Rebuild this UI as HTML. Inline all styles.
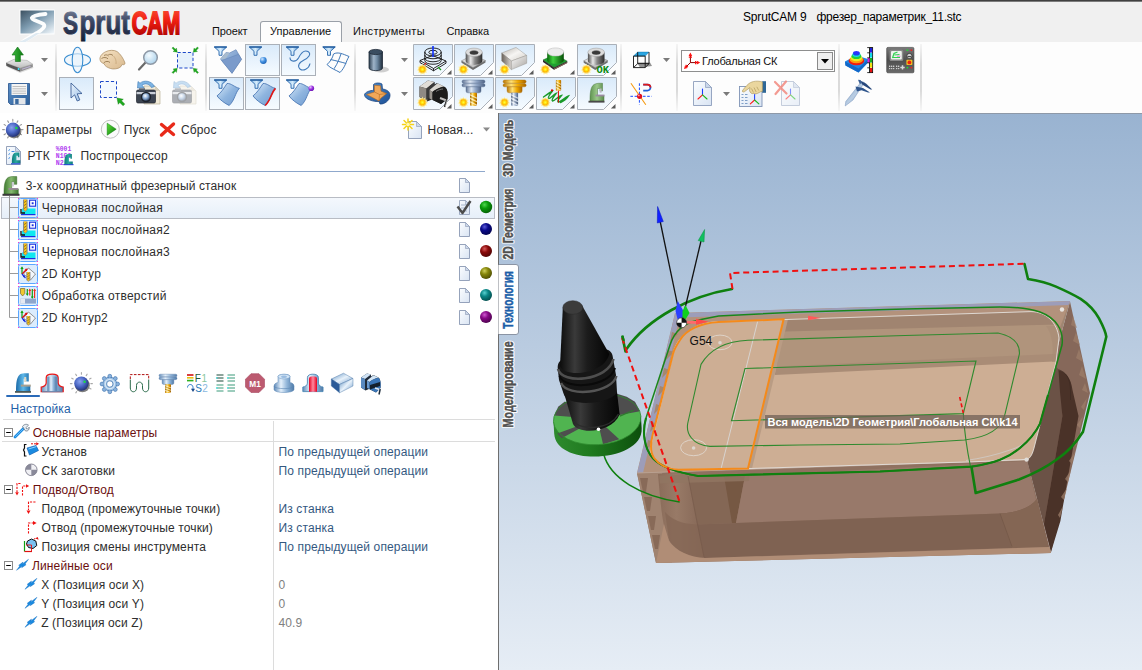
<!DOCTYPE html>
<html lang="ru">
<head>
<meta charset="utf-8">
<title>SprutCAM 9 фрезер_параметрик_11.stc</title>
<style>
*{box-sizing:border-box;margin:0;padding:0}
html,body{width:1142px;height:670px;overflow:hidden;background:#f0f0f0;font-family:"Liberation Sans",sans-serif;font-size:12px;color:#2e2e2e}
.abs{position:absolute}
#app{position:absolute;left:0;top:0;width:1142px;height:670px;overflow:hidden;background:#f0f0f0}
#topline{left:0;top:0;width:1142px;height:2px;background:linear-gradient(#404040 0,#404040 50%,#b8b8b8 100%)}
#toolbar{left:0;top:42px;width:1142px;height:71px;background:#fdfdfd}
#left{left:0;top:113px;width:498px;height:557px;background:#fff}
#view{left:498px;top:113px;width:644px;height:557px;background:linear-gradient(#93abcf 0,#a9bdd9 35%,#d3deec 75%,#f3f6fa 100%);border-left:1px solid #6a6a6a}
.t{position:absolute;white-space:nowrap;line-height:14px;letter-spacing:.13px}
.pv{color:#34587f}.pn{color:#808080}
.tab{position:absolute;white-space:nowrap;font-size:11px;line-height:13px;color:#111}
.sep{position:absolute;width:1px;background:#d0d0d0}
.selbtn{position:absolute;border:1px solid #aeb4bc;background:linear-gradient(#dcecfb,#eef6fd 60%,#f7fbff)}
svg{position:absolute;overflow:visible}
</style>
</head>
<body>
<div id="app">
<div id="topline" class="abs"></div>

<!-- HEADER -->
<div id="header" class="abs" style="left:0;top:0;width:1142px;height:42px">
<svg width="200" height="42" style="left:0;top:0" viewBox="0 0 200 42">
<defs>
<linearGradient id="lg1" x1="0" y1="0" x2="1" y2="1"><stop offset="0" stop-color="#3b5060"/><stop offset=".45" stop-color="#7d9bb0"/><stop offset="1" stop-color="#f4f9fd"/></linearGradient>
<linearGradient id="lgS" x1="0" y1="0" x2="0" y2="1"><stop offset="0" stop-color="#8a92a8"/><stop offset=".5" stop-color="#3a4562"/><stop offset="1" stop-color="#141e38"/></linearGradient>
<linearGradient id="lgC" x1="0" y1="0" x2="0" y2="1"><stop offset="0" stop-color="#ff5a3c"/><stop offset=".45" stop-color="#ee1c10"/><stop offset="1" stop-color="#9e0000"/></linearGradient>
<filter id="blur1"><feGaussianBlur stdDeviation="0.6"/></filter>
</defs>
<rect x="19.5" y="9.5" width="35" height="25" fill="#fff"/>
<rect x="20.5" y="10.5" width="33.5" height="23" fill="url(#lg1)"/>
<path d="M45.5 14 C39 14.6 32.5 16 31.8 18 C31.5 20 40 21.5 43.5 24 C46 26.5 42.5 29.5 37 33 C32 36 27 39 23 41.5" fill="none" stroke="#fff" stroke-width="3.8" stroke-linecap="round" opacity=".97"/>
<path d="M40 33 C35 36 30 39.5 25.5 42 L19 42 C25 39.5 31 36 36 33 Z" fill="#dfeaf2"/>
<g font-family="Liberation Sans,sans-serif" font-weight="bold" stroke-width="1">
<text x="63" y="33.8" font-size="32" textLength="15" lengthAdjust="spacingAndGlyphs" fill="url(#lgS)" stroke="url(#lgS)">S</text>
<text x="79.5" y="33.8" font-size="34" textLength="50.5" lengthAdjust="spacingAndGlyphs" fill="url(#lgS)" stroke="url(#lgS)">prut</text>
<text x="131.800" y="33.800" font-size="32" textLength="48.600" lengthAdjust="spacingAndGlyphs" fill="url(#lgC)" stroke="url(#lgC)" stroke-width="2">CAM</text>
</g>
</svg>
<div class="abs" style="left:260px;top:21px;width:82px;height:22px;background:#fdfdfd;border:1px solid #9aa0a8;border-bottom:none;border-radius:3px 3px 0 0"></div>
<span class="tab" style="left:212px;top:24.7px;letter-spacing:-.15px">Проект</span>
<span class="tab" style="left:270px;top:24.7px">Управление</span>
<span class="tab" style="left:353px;top:24.7px;letter-spacing:.3px">Инструменты</span>
<span class="tab" style="left:446.5px;top:24.7px;letter-spacing:-.1px">Справка</span>
<span class="t" style="left:743px;top:10px;font-size:12px;color:#000;letter-spacing:-.18px">SprutCAM 9</span>
<span class="t" style="left:816.5px;top:10px;font-size:12px;color:#000;letter-spacing:-.27px">фрезер_параметрик_11.stc</span>
</div>

<!-- TOOLBAR -->
<div id="toolbar" class="abs">
<svg width="1142" height="71" viewBox="0 42 1142 71" style="left:0;top:0">
<defs>
<linearGradient id="gsel" x1="0" y1="0" x2="0" y2="1"><stop offset="0" stop-color="#d9eafa"/><stop offset=".6" stop-color="#eaf4fd"/><stop offset="1" stop-color="#f6fbff"/></linearGradient>
<linearGradient id="gsep" x1="0" y1="0" x2="0" y2="1"><stop offset="0" stop-color="#ececec"/><stop offset=".3" stop-color="#b8b8b8"/><stop offset=".7" stop-color="#b8b8b8"/><stop offset="1" stop-color="#f2f2f2"/></linearGradient>
<radialGradient id="gsun" cx=".5" cy=".5" r=".5"><stop offset="0" stop-color="#ffff40"/><stop offset=".55" stop-color="#ffd400"/><stop offset=".8" stop-color="#ffb000"/><stop offset="1" stop-color="#ffe88a" stop-opacity=".5"/></radialGradient>
<g id="sun"><path d="M0 -5.800 L1 -3.500 L3 -5 L2.800 -2.600 L5.400 -2.600 L3.600 -.800 L5.800 .600 L3.500 1.400 L4.600 3.600 L2.200 3.200 L2 5.600 L.2 3.800 L-1.600 5.600 L-2 3.200 L-4.400 3.800 L-3.400 1.500 L-5.800 .800 L-3.700 -.700 L-5.200 -2.600 L-2.800 -2.600 L-3 -5 L-1 -3.500 Z" fill="#fff3a0" opacity=".9"/><circle r="4.400" fill="#ffe680" opacity=".45"/><circle r="3.4" fill="url(#gsun)" stroke="#f5a800" stroke-width=".5"/></g>
<path id="dd" d="M0 0 h7 l-3.5 4 z" fill="#7a7a7a"/>
<path id="cornertri" d="M0 0 v-4.6 l-4.6 4.6 z" fill="#5a5a5a"/>
</defs>
<rect x="55.5" y="44" width="1" height="67" fill="url(#gsep)"/>
<rect x="205.5" y="44" width="1" height="67" fill="url(#gsep)"/>
<rect x="354.5" y="44" width="1" height="67" fill="url(#gsep)"/>
<rect x="620.5" y="44" width="1" height="67" fill="url(#gsep)"/>
<rect x="676.5" y="44" width="1" height="67" fill="url(#gsep)"/>
<rect x="838.5" y="44" width="1" height="67" fill="url(#gsep)"/>
<rect x="920.5" y="44" width="1" height="67" fill="url(#gsep)"/>
<rect x="245.5" y="44.5" width="34" height="31" fill="url(#gsel)" stroke="#aab0b8"/>
<rect x="281.5" y="44.5" width="34" height="31" fill="url(#gsel)" stroke="#aab0b8"/>
<rect x="59.5" y="77.5" width="34" height="32" fill="url(#gsel)" stroke="#aab0b8"/>
<rect x="209.5" y="77.5" width="34" height="32" fill="url(#gsel)" stroke="#aab0b8"/>
<rect x="245.5" y="77.5" width="34" height="32" fill="url(#gsel)" stroke="#aab0b8"/>
<path d="M413.5 44.5 H452.5 V62.5 L439.5 75.5 H413.5 Z" fill="url(#gsel)" stroke="#aab0b8"/>
<use href="#cornertri" x="451.5" y="74.5"/>
<path d="M413.5 77.5 H452.5 V96.5 L439.5 109.5 H413.5 Z" fill="url(#gsel)" stroke="#aab0b8"/>
<use href="#cornertri" x="451.5" y="108.5"/>
<path d="M454.5 44.5 H493.5 V62.5 L480.5 75.5 H454.5 Z" fill="url(#gsel)" stroke="#aab0b8"/>
<use href="#cornertri" x="492.5" y="74.5"/>
<path d="M454.5 77.5 H493.5 V96.5 L480.5 109.5 H454.5 Z" fill="url(#gsel)" stroke="#aab0b8"/>
<use href="#cornertri" x="492.5" y="108.5"/>
<path d="M495.5 44.5 H534.5 V62.5 L521.5 75.5 H495.5 Z" fill="url(#gsel)" stroke="#aab0b8"/>
<use href="#cornertri" x="533.5" y="74.5"/>
<path d="M495.5 77.5 H534.5 V96.5 L521.5 109.5 H495.5 Z" fill="url(#gsel)" stroke="#aab0b8"/>
<use href="#cornertri" x="533.5" y="108.5"/>
<use href="#cornertri" x="574.5" y="74.5"/>
<path d="M536.5 77.5 H575.5 V96.5 L562.5 109.5 H536.5 Z" fill="url(#gsel)" stroke="#aab0b8"/>
<use href="#cornertri" x="574.5" y="108.5"/>
<path d="M577.5 44.5 H616.5 V62.5 L603.5 75.5 H577.5 Z" fill="url(#gsel)" stroke="#aab0b8"/>
<use href="#cornertri" x="615.5" y="74.5"/>
<path d="M577.5 77.5 H616.5 V96.5 L603.5 109.5 H577.5 Z" fill="url(#gsel)" stroke="#aab0b8"/>
<use href="#cornertri" x="615.5" y="108.5"/>
<use href="#dd" x="41" y="58"/>
<use href="#dd" x="41" y="92"/>
<use href="#dd" x="401" y="58"/>
<use href="#dd" x="401" y="92"/>
<use href="#dd" x="663" y="58"/>
<use href="#dd" x="723" y="92"/>
<rect x="681.5" y="50.5" width="153" height="21" fill="#fff" stroke="#8e8f8f"/>
<rect x="817.5" y="52.5" width="15" height="17" fill="#efefef" stroke="#8a8a8a"/>
<path d="M821 59 h8 l-4 4.5 z" fill="#000"/>
<!--I1--><defs>
<linearGradient id="gDrvTop" x1="0" y1="0" x2="0" y2="1"><stop offset="0" stop-color="#e9e9e9"/><stop offset="1" stop-color="#bdbdbd"/></linearGradient>
<linearGradient id="gDrvFr" x1="0" y1="0" x2="0" y2="1"><stop offset="0" stop-color="#8c8c8c"/><stop offset="1" stop-color="#5f5f5f"/></linearGradient>
<linearGradient id="gGreenUp" x1="0" y1="0" x2="1" y2="0"><stop offset="0" stop-color="#3fb83f"/><stop offset="1" stop-color="#0d7a12"/></linearGradient>
<linearGradient id="gFloppy" x1="0" y1="0" x2="1" y2="1"><stop offset="0" stop-color="#5b8fc8"/><stop offset="1" stop-color="#2d5f98"/></linearGradient>
<radialGradient id="gLens" cx=".4" cy=".35" r=".7"><stop offset="0" stop-color="#f4fbff"/><stop offset="1" stop-color="#a9d0ea"/></radialGradient>
<linearGradient id="gHand" x1="0" y1="0" x2="1" y2="1"><stop offset="0" stop-color="#f6e3c4"/><stop offset="1" stop-color="#d9b98e"/></linearGradient>
<linearGradient id="gCur" x1="0" y1="0" x2="1" y2="1"><stop offset="0" stop-color="#eaf3fc"/><stop offset="1" stop-color="#9cc0e6"/></linearGradient>
<radialGradient id="gCamLens" cx=".4" cy=".35" r=".7"><stop offset="0" stop-color="#ffffff"/><stop offset=".5" stop-color="#8fb0d8"/><stop offset="1" stop-color="#2b3d5c"/></radialGradient>
<g id="garrow"><path d="M0 0 L6 1.2 L4.2 2.6 L7.4 5.8 L5.8 7.4 L2.6 4.2 L1.2 6 Z" fill="#1faa1f" stroke="#0c7a0c" stroke-width=".4"/></g>
<g id="camera">
<path d="M8 6 h11 l5 5 v13 h-16 z" fill="#f1ead8" stroke="#b9b19a" stroke-width=".7"/>
<path d="M19 6 v5 h5 z" fill="#d8d0bb"/>
<path d="M18.500 6.500 C16 1 8 -0.500 4 3.200 L2 1.500 L1.500 8 L8 7.500 L6 5.300 C9 3 13.500 3.500 15.400 7.600 Z" fill="#7db4e4" stroke="#3c78b4" stroke-width=".6"/>
<rect x="0.5" y="10" width="19" height="13" rx="1.5" fill="#3c4450" stroke="#22272f" stroke-width=".7"/>
<rect x="3" y="8.3" width="6" height="2.4" fill="#596270"/>
<rect x="0.5" y="12" width="19" height="2.2" fill="#c9ced6"/>
<circle cx="10" cy="17" r="5.2" fill="#1d232c"/>
<circle cx="10" cy="17" r="3.8" fill="url(#gCamLens)"/>
</g>
</defs>
<!-- upload drive -->
<g>
<path d="M7 67 L20 73 L33.500 68 L32.800 66" fill="#000" opacity=".12"/>
<path d="M6 63 L14 59.300 L27 60.400 L32.800 64.200 L20 68.200 Z" fill="url(#gDrvTop)" stroke="#9a9a9a" stroke-width=".5"/>
<path d="M6 63 L20 68.200 V71.800 L6.400 66 Z" fill="#565656"/>
<path d="M20 68.200 L32.800 64.200 V67 L20 71.800 Z" fill="#8e8e8e"/>
<path d="M22 69.200 L30.500 66.400" stroke="#b9b0cc" stroke-width="1.200"/>
<circle cx="18.600" cy="69" r="1" fill="#35e8ff"/>
<path d="M17.600 47 L23.400 55 H20.400 V61.500 H15.400 V55 H12 Z" fill="url(#gGreenUp)" stroke="#0d6e12" stroke-width=".6"/>
</g>
<!-- save -->
<g>
<path d="M8.5 83.5 H29.5 V104.5 H10.5 L8.5 102.5 Z" fill="url(#gFloppy)" stroke="#24518a" stroke-width=".8"/>
<rect x="11.5" y="84" width="15.5" height="11" fill="#f4f4f4"/>
<path d="M12.5 86.5 h13.5 M12.5 88.8 h13.5 M12.5 91.1 h13.5 M12.5 93.3 h13.5" stroke="#b9b9b9" stroke-width=".9"/>
<rect x="13.5" y="98" width="12" height="6.5" fill="#e3e6ea"/>
<rect x="15.2" y="99" width="3.4" height="5" fill="#3a6aa0"/>
</g>
<!-- orbit -->
<g fill="#e9f4fc" fill-opacity=".6" stroke="#3d8fd1" stroke-width="1.1">
<ellipse cx="77.5" cy="60" rx="13" ry="6.3"/>
<ellipse cx="77.5" cy="60" rx="5.3" ry="12.8"/>
</g>
<!-- hand -->
<g>
<path d="M100 59.5 C99.5 56.5 102 53.5 105.5 51.8 C109 50 114 49.8 117 51.5 C120 53.5 123.5 58.5 125 63 C125.2 64.5 123.5 65.2 122.3 64.3 L121 66.5 C119 69 113 69.5 110.5 68.5 C107.5 67.5 104.5 66 104 63.5 C101.5 63 100.3 61.5 100 59.5 Z" fill="url(#gHand)" stroke="#a88a60" stroke-width=".7"/>
<path d="M101.5 58.5 C103.5 57 106.5 57.2 108 58.8 M103.8 62.8 C105.5 61 108.5 61 110 62.5 M108.3 54.8 C110 54 112 54.3 113 55.6 M104 55.5 C105.5 54.5 107.5 54.7 108.5 56" fill="none" stroke="#8d6f45" stroke-width=".8"/>
<path d="M113.5 56 C115.5 58 116.5 61 116 64" fill="none" stroke="#c2a072" stroke-width=".7"/>
</g>
<!-- magnifier -->
<g>
<path d="M145.5 62.5 L139 69.5" stroke="#6a6a6a" stroke-width="2.2" stroke-linecap="round"/>
<circle cx="150.5" cy="57.5" r="6.8" fill="url(#gLens)" stroke="#8e99a6" stroke-width="1.5"/>
</g>
<!-- zoom fit -->
<g>
<rect x="177.5" y="52.5" width="15.5" height="15.5" fill="#e6f1fb" stroke="#1c47c8" stroke-width="1" stroke-dasharray="3.2 2"/>
<use href="#garrow" transform="translate(177.3,52.3) rotate(180) scale(.72)"/>
<use href="#garrow" transform="translate(193.2,52.3) rotate(270) scale(.72)"/>
<use href="#garrow" transform="translate(177.3,68.2) rotate(90) scale(.72)"/>
<use href="#garrow" transform="translate(193.2,68.2) scale(.72)"/>
</g>
<!-- pointer -->
<path d="M71 83 L71 98 L74.6 94.8 L77.2 101 L79.8 99.9 L77.2 93.8 L82 93.5 Z" fill="url(#gCur)" stroke="#3c5f96" stroke-width=".9" stroke-linejoin="round"/>
<!-- dashed select -->
<g>
<rect x="100.5" y="81.5" width="16" height="16" fill="#f4f9fe" stroke="#1c47c8" stroke-width="1" stroke-dasharray="3.2 2"/>
<use href="#garrow" transform="translate(117,98) scale(1.05)"/>
</g>
<!-- cameras -->
<use href="#camera" transform="translate(136,80)"/>
<use href="#camera" transform="translate(172,80)" opacity=".42"/>
<!--/I1-->
<!--I2--><defs>
<linearGradient id="gFun" x1="0" y1="0" x2="1" y2="0"><stop offset="0" stop-color="#7fb6e6"/><stop offset=".5" stop-color="#d6ecfb"/><stop offset="1" stop-color="#4f8fd0"/></linearGradient>
<g id="funnel"><path d="M.3 .5 H12.700 L8 4.800 V8.800 H5 V4.800 Z" fill="url(#gFun)" stroke="#2a68ad" stroke-width=".9" stroke-linejoin="round"/><path d="M.3 .5 H12.700" stroke="#1f5a9c" stroke-width="1.300"/></g>
<linearGradient id="gSurf" x1="0" y1="0" x2="1" y2="1"><stop offset="0" stop-color="#dcecfa"/><stop offset=".5" stop-color="#8fb5df"/><stop offset="1" stop-color="#6d99cf"/></linearGradient>
<g id="surf"><path d="M11 4 C15 3.500 19 8 23.400 8.800 C19 13.500 19 20.500 13.200 26 C9 24 4 20.500 1 16.400 C5 13.500 8 8.500 11 4 Z" fill="url(#gSurf)" stroke="#3f6fae" stroke-width=".8" stroke-linejoin="round"/></g>
<linearGradient id="gFold" x1="0" y1="0" x2="1" y2="1"><stop offset="0" stop-color="#a9c4e4"/><stop offset="1" stop-color="#5f86bd"/></linearGradient>
<radialGradient id="gBall" cx=".35" cy=".3" r=".8"><stop offset="0" stop-color="#cfe6ff"/><stop offset=".5" stop-color="#3f8fe0"/><stop offset="1" stop-color="#1a5db0"/></radialGradient>
<radialGradient id="gBallP" cx=".35" cy=".3" r=".8"><stop offset="0" stop-color="#e8c8ff"/><stop offset=".5" stop-color="#9a30e0"/><stop offset="1" stop-color="#6010a8"/></radialGradient>
<linearGradient id="gCyl" x1="0" y1="0" x2="1" y2="0"><stop offset="0" stop-color="#2c3e50"/><stop offset=".35" stop-color="#9fb4c8"/><stop offset=".6" stop-color="#6f8aa3"/><stop offset="1" stop-color="#1f2d3c"/></linearGradient>
<linearGradient id="gBluP" x1="0" y1="0" x2="1" y2="1"><stop offset="0" stop-color="#4f8fd0"/><stop offset="1" stop-color="#1d4f94"/></linearGradient>
</defs>
<!-- filter folder -->
<g>
<path d="M220.500 59 L226 52.500 L229.500 53 L236 49.700 L241.500 59.300 L232 73.300 Z" fill="url(#gFold)" stroke="#5a7eb0" stroke-width=".6" stroke-linejoin="round"/>
<path d="M220.500 59 L226 52.500 L229.500 53.200 L225 59.500 Z" fill="#a9bccf"/>
<path d="M221.500 60.500 L238.500 54.300 L241.500 59.300 L232 73.300 Z" fill="#7b9bcb" stroke="#5a7eb0" stroke-width=".4"/>
<use href="#funnel" transform="translate(214,46.5)"/>
</g>
<!-- filter point -->
<g><use href="#funnel" transform="translate(249,46.5)"/><circle cx="263.3" cy="60.5" r="3.4" fill="url(#gBall)"/></g>
<!-- filter curve -->
<g><use href="#funnel" transform="translate(286,46.5)"/>
<path d="M290 57.5 C290 62 296 62.5 298.5 58 C301 53 304 49.5 308 51.5 C312 54 308 58 304 60 C299 62.5 297 66 300 69 C303 71.5 309 69 310 63.5" fill="none" stroke="#3f78b8" stroke-width="1.1"/></g>
<!-- filter mesh -->
<g><use href="#funnel" transform="translate(322.5,46.5)"/>
<g fill="none" stroke="#3f78b8" stroke-width="1"><path d="M333.5 54 C338 51.5 343 54 349 56.5 C346 61 345.5 67 340 72.5 C336 70 330.5 68.5 327 64.5 C330.5 61.5 332.5 58 333.5 54 Z"/><path d="M341 53.8 C339.5 58 338 63 334 68.8 M330.5 59.5 C335 60.5 341 62 346.2 63.5"/></g></g>
<!-- row2 filter surfaces -->
<g><use href="#surf" transform="translate(216,79.5)"/><use href="#funnel" transform="translate(214,79.5)"/></g>
<g><use href="#surf" transform="translate(252,79.5)"/><path d="M275.400 88.300 C271 93 271 100 265.200 105.500" fill="none" stroke="#e01818" stroke-width="1.700"/><use href="#funnel" transform="translate(250,79.5)"/></g>
<g><use href="#surf" transform="translate(288,79.5)"/><use href="#funnel" transform="translate(286,79.5)"/><circle cx="311.300" cy="88.300" r="2.800" fill="url(#gBallP)"/></g>
<!-- cylinder -->
<g>
<ellipse cx="381" cy="69.5" rx="8" ry="3" fill="#000" opacity=".18"/>
<path d="M369 52 V68 C369 71.5 382.5 71.5 382.5 68 V52 Z" fill="url(#gCyl)" stroke="#1f2b38" stroke-width=".8"/>
<ellipse cx="375.75" cy="52" rx="6.75" ry="2.6" fill="#3a4d60" stroke="#1f2b38" stroke-width=".8"/>
</g>
<!-- 3d part -->
<g>
<path d="M364.5 95 C364.5 92 371 90 373.5 90.5 L373.5 84.5 C375 82.5 380 82.5 382 84 L382.5 89 C387 89.5 390.5 92 390 96 C389.5 101 384 104.5 380 104 L379 101.5 C374 102 365 99.5 364.5 95 Z" fill="url(#gBluP)" stroke="#163f7a" stroke-width=".7"/>
<path d="M366.5 94.5 L374.5 92 L374.5 85.2 L380.5 85.8 L381 91.2 L386.5 93.5 L380.5 98.5 L379 101 L372.5 97.5 Z" fill="#f0a85a" stroke="#b56a20" stroke-width=".6"/>
<path d="M374.5 92 L379.5 94.5 L386.5 93.5 M379.5 94.5 L379 101" fill="none" stroke="#b56a20" stroke-width=".6"/>
</g>
<!--/I2-->
<!--I3--><defs>
<linearGradient id="gMetH" x1="0" y1="0" x2="1" y2="0"><stop offset="0" stop-color="#4a4a4a"/><stop offset=".3" stop-color="#e8e8e8"/><stop offset=".55" stop-color="#8a8a8a"/><stop offset="1" stop-color="#2c2c2c"/></linearGradient>
<linearGradient id="gPlate" x1="0" y1="0" x2="1" y2="1"><stop offset="0" stop-color="#f2f2f2"/><stop offset="1" stop-color="#a9a9a9"/></linearGradient>
<linearGradient id="gGrnH" x1="0" y1="0" x2="1" y2="0"><stop offset="0" stop-color="#0a6a0a"/><stop offset=".35" stop-color="#3fd03f"/><stop offset="1" stop-color="#064f06"/></linearGradient>
<linearGradient id="gGoldH" x1="0" y1="0" x2="1" y2="0"><stop offset="0" stop-color="#b87400"/><stop offset=".35" stop-color="#ffe27a"/><stop offset=".65" stop-color="#f0a800"/><stop offset="1" stop-color="#a86400"/></linearGradient>
<linearGradient id="gSteelH" x1="0" y1="0" x2="1" y2="0"><stop offset="0" stop-color="#5f7394"/><stop offset=".35" stop-color="#dfe8f4"/><stop offset=".65" stop-color="#8fa4c4"/><stop offset="1" stop-color="#4f6384"/></linearGradient>
<linearGradient id="gBoxT" x1="0" y1="0" x2="1" y2="1"><stop offset="0" stop-color="#b9b4ae"/><stop offset=".5" stop-color="#f6f5f3"/><stop offset="1" stop-color="#d2cec8"/></linearGradient>
<linearGradient id="gBoxL" x1="0" y1="0" x2="1" y2="0"><stop offset="0" stop-color="#6a625a"/><stop offset="1" stop-color="#d9d6d2"/></linearGradient>
<linearGradient id="gBoxR" x1="0" y1="0" x2="1" y2="1"><stop offset="0" stop-color="#fafafa"/><stop offset="1" stop-color="#a8a49f"/></linearGradient>
<linearGradient id="gMach" x1="0" y1="0" x2="1" y2="0"><stop offset="0" stop-color="#5f9450"/><stop offset=".5" stop-color="#9cc88a"/><stop offset="1" stop-color="#5a8a4c"/></linearGradient>
<g id="ringplate">
<path d="M-12.5 8.5 L-1.5 3 L11.5 8.2 L-1 15.5 Z" fill="url(#gPlate)" stroke="#777" stroke-width=".5"/>
<path d="M-12.5 8.5 L-1 15.5 L11.5 8.2 V10.2 L-1 17.8 L-12.5 10.5 Z" fill="#6e6e6e"/>
<path d="M-8.3 0 V8.5 C-8.3 14 8.3 14 8.3 8.5 V0 Z" fill="url(#gMetH)"/>
<ellipse cx="0" cy="0" rx="8.3" ry="4.2" fill="#dcdcdc" stroke="#9a9a9a" stroke-width=".5"/>
<ellipse cx="0" cy=".3" rx="4.3" ry="2.2" fill="#3a3a3a"/>
<path d="M-4.3 .3 A4.3 2.2 0 0 1 4.3 .3 A4.6 3 0 0 0 -4.3 .3 Z" fill="#8a8a8a"/>
</g>
<g id="holder">
<rect x="-11.5" y="0" width="23" height="3.2" rx="1.6"/>
<rect x="-11.5" y="3.6" width="23" height="3.2" rx="1.6"/>
<path d="M-7.5 6.8 H7.5 V11 Q7.5 12.8 5.5 12.8 H-5.5 Q-7.5 12.8 -7.5 11 Z"/>
</g>
<g id="mill"><rect x="-3.5" y="0" width="7" height="13" rx=".8"/><path d="M-3.5 2 L3.5 5.5 M-3.5 5.5 L3.5 9 M-3.5 9 L3.5 12.5" stroke="#fff" stroke-opacity=".65" stroke-width="1.2"/><path d="M-3.5 3.6 L3.5 7.1 M-3.5 7.1 L3.5 10.6" stroke="#000" stroke-opacity=".25" stroke-width=".8"/></g>
</defs>
<!-- R1B1 wireframe -->
<g fill="none" stroke="#111" stroke-width=".9">
<path d="M420 60.5 L432.5 55.5 L446 61 L433.5 68.5 Z M420 60.5 V62.6 L433.5 70.8 L446 63.2 V61 M433.5 68.5 V70.8"/>
<ellipse cx="433" cy="52" rx="8.2" ry="4"/><ellipse cx="433" cy="52.3" rx="4.2" ry="2"/>
<path d="M424.8 52 V60.5 C424.8 65.5 441.2 65.5 441.2 60.5 V52"/>
<path d="M424.8 55 C424.8 60 441.2 60 441.2 55 M424.8 58 C424.8 63 441.2 63 441.2 58"/>
<path d="M433 46 V57" stroke="#1030ff" stroke-width="1.6"/>
<path d="M438 67 L441 70" stroke="#18a018" stroke-width="1.2"/>
<path d="M424.5 65 L426 63" stroke="#e01818" stroke-width="1.2"/>
</g>
<use href="#sun" x="422.4" y="69.4"/>
<!-- R1B2 ring -->
<use href="#ringplate" transform="translate(474,52.3)"/>
<use href="#sun" x="463.4" y="69.4"/>
<!-- R1B3 box -->
<g stroke="#8a857f" stroke-width=".4" stroke-linejoin="round">
<path d="M501.7 53 L516 47.4 L526.7 55.4 L511.4 61 Z" fill="url(#gBoxT)"/>
<path d="M501.7 53 L511.4 61 V69.6 L501.7 61 Z" fill="url(#gBoxL)"/>
<path d="M511.4 61 L526.7 55.4 V63.3 L511.4 69.6 Z" fill="url(#gBoxR)"/>
</g>
<use href="#sun" x="504.5" y="69.4"/>
<!-- R1B4 green cyl -->
<g>
<path d="M543 60 L555 54.5 L567.2 61.2 L554 67.5 Z" fill="#1fa030" stroke="#0a5a12" stroke-width=".5"/>
<path d="M543 60 L554 67.5 L567.2 61.2 V63 L554 69.8 L543 62 Z" fill="#2a2a2a"/>
<path d="M554 69.8 L567.2 63 V62 L554 68.6 Z" fill="#8a6a5a"/>
<path d="M547.2 52 V60 C547.2 65 563.8 65 563.8 60 V52 Z" fill="url(#gGrnH)"/>
<ellipse cx="555.5" cy="52" rx="8.3" ry="4.1" fill="#ececec" stroke="#b5b5b5" stroke-width=".5"/>
</g>
<use href="#sun" x="545.3" y="69.4"/>
<!-- R1B5 ring OK -->
<use href="#ringplate" transform="translate(596.2,52.3)"/>
<use href="#sun" x="586.3" y="69.4"/>
<text x="596.5" y="73" font-family="Liberation Mono,monospace" font-weight="bold" font-size="10" fill="#0a8a0a" textLength="12.5" lengthAdjust="spacingAndGlyphs">OK</text>
<!-- R2B1 vise -->
<g>
<path d="M419.5 86.5 L428 80.5 L434.5 82 L434.5 84.5 L437 83 L444 86.5 C447.5 88 448 93 447.5 99 L441 104 L432 99.5 L427 101.5 L419.5 97 Z" fill="#2a2a2a"/>
<path d="M419.5 86.5 L428 80.5 L434.5 82 L426.5 88.5 Z" fill="#e0ddd8"/>
<path d="M419.5 86.5 L426.5 88.5 V100 L419.5 97 Z" fill="#8f8a84"/>
<path d="M426.5 88.5 L434.5 82 V93 L426.5 100 Z" fill="#3a3a3a"/>
<path d="M429.5 90 L437.5 83.2 L444 86.5 C440 87 434 90.5 432.5 92 Z" fill="#d9d6d0"/>
<path d="M429.5 90 L432.5 92 V100 L429.5 98.5 Z" fill="#9a958f"/>
<path d="M432.5 92 C435 89.5 441 87 444.5 87 C447.5 88.5 448 93 447.5 99 L441 104 L432.5 100 Z" fill="#1c1c1c"/>
<path d="M436 91.5 C438 90 441 89 443 89" stroke="#8a8a8a" stroke-width=".8" fill="none"/>
<path d="M440 98 L446.5 100.5" stroke="#bdbdbd" stroke-width="2"/>
<path d="M447 99 L444.5 107" stroke="#222" stroke-width="1.6"/><path d="M447.5 99 L445.3 106.5" stroke="#ddd" stroke-width=".6"/>
</g>
<use href="#sun" x="422.4" y="102.4"/>
<!-- R2B2 steel holder gold mill -->
<use href="#holder" transform="translate(473.5,80)" fill="url(#gSteelH)" stroke="#4a5f84" stroke-width=".4"/>
<use href="#mill" transform="translate(473.5,92.8)" fill="url(#gGoldH)"/>
<use href="#sun" x="463.4" y="102.4"/>
<!-- R2B3 gold holder steel mill -->
<use href="#holder" transform="translate(514.6,80)" fill="url(#gGoldH)" stroke="#a86a00" stroke-width=".4"/>
<use href="#mill" transform="translate(514.6,92.8)" fill="url(#gSteelH)"/>
<use href="#sun" x="504.5" y="102.4"/>
<!-- R2B4 toolpath -->
<g>
<path d="M543.5 97 C547 94.5 550 92.5 552 91.5 C550 94.5 547.5 97.5 548.5 98.5 C550 99 553.5 94.5 556 93.5 C554 96.5 551 100 552.5 101 C554.5 101.5 558 96 561.5 95.5 C559.5 98 556.5 101.5 558.5 102 C561 102 564.5 97.5 568.5 96 C567 98.5 563 101.5 560.5 102.5" fill="none" stroke="#1a9a2a" stroke-width="1.4" stroke-linecap="round"/>
<use href="#mill" transform="translate(558.5,80) scale(.75,.82)" fill="url(#gGoldH)"/>
<path d="M558.4 90.7 V102.6" stroke="#e00000" stroke-width="1"/>
<circle cx="552" cy="90.4" r="1.1" fill="#e00000"/>
</g>
<use href="#sun" x="545.3" y="102.4"/>
<!-- R2B5 machine -->
<g id="machG">
<path d="M590 101 C590 93 590.5 87 594 84.5 C596.5 83 600 83.2 602.5 83.3 V91 H600 V88.5 H597.5 V95.5 H604 V101 Z" fill="url(#gMach)" stroke="#4c7a40" stroke-width=".5"/>
<rect x="599.6" y="88.5" width="2" height="4.2" fill="#b9b9c0"/>
<rect x="595.5" y="94.6" width="9" height="1.8" fill="#9a8aa0"/>
<rect x="588.5" y="100.8" width="16" height="1.8" fill="#4a4a4a"/>
</g>
<!--/I3-->
<!--I4--><defs>
<linearGradient id="gDoc" x1="0" y1="0" x2="1" y2="1"><stop offset="0" stop-color="#fbfdff"/><stop offset="1" stop-color="#d9e4f3"/></linearGradient>
<g id="docic"><path d="M.5 .5 H12.5 L18.5 6.5 V24.5 H.5 Z" fill="url(#gDoc)" stroke="#8c9dbb" stroke-width=".9"/><path d="M12.5 .5 V6.5 H18.5 Z" fill="#c9d6ea" stroke="#8c9dbb" stroke-width=".7"/></g>
<g id="axis3" stroke-width="1.1" stroke-linecap="round"><path d="M0 0 V-5.8" stroke="#1a3cff"/><path d="M0 0 L-4.5 4.2" stroke="#ff1a1a"/><path d="M0 0 L4.5 4.2" stroke="#18b818"/></g>
<linearGradient id="gCnc" x1="0" y1="0" x2="0" y2="1"><stop offset="0" stop-color="#7a7a7a"/><stop offset=".5" stop-color="#4e4e4e"/><stop offset="1" stop-color="#6a6a6a"/></linearGradient>
<linearGradient id="gCal" x1="0" y1="0" x2="1" y2="1"><stop offset="0" stop-color="#6f93bf"/><stop offset=".5" stop-color="#b9cde3"/><stop offset="1" stop-color="#8aa6c8"/></linearGradient>
</defs>
<!-- box view -->
<g>
<path d="M637 62.5 L650 62.5 L652 66 L640 67.5 Z" fill="#6f6f6f" opacity=".75"/>
<path d="M633.5 56.1 L637.7 52.1 H649 L645.2 56.1 Z" fill="#2aa6e2" stroke="#1478b0" stroke-width=".5"/>
<path d="M633.5 56.1 H645.2 V67.6 H633.5 Z M637.7 52.1 V63.6 H649 V52.1 M633.5 67.6 L637.7 63.6 M645.2 67.6 L649 63.6" fill="none" stroke="#111" stroke-width=".9"/>
</g>
<!-- snap -->
<g>
<path d="M630.9 83.3 L645.8 104.7" stroke="#f59a10" stroke-width="1.1"/>
<path d="M639.4 83.3 V104.7 M630.4 96.3 H651.8" stroke="#1a4cff" stroke-width="1" stroke-dasharray="2.6 1.6"/>
<circle cx="639.6" cy="96.3" r="2.6" fill="#e01020"/><circle cx="638.8" cy="95.4" r=".9" fill="#ff9a9a"/>
<path d="M643.2 84.6 H647.5 A3 3 0 0 1 647.5 90.6 H643.2" fill="none" stroke="#2060d8" stroke-width="1.7"/>
<path d="M643.2 84.6 H647.5 A3 3 0 0 1 650.5 87.6" fill="none" stroke="#e01818" stroke-width="1.7"/>
</g>
<!-- combobox axis -->
<g stroke="#8b0000" stroke-width="1" fill="#ff1010">
<path d="M690.4 62.6 V54 M690.4 62.6 H699 M690.4 62.6 L685 68" fill="none"/>
<path d="M690.4 52.6 L692.2 56 H688.6 Z M700.2 62.6 L696.8 60.8 V64.4 Z M684 69 L685 65.4 L687.6 68 Z" stroke="none"/>
<path d="M688.8 57.2 h3.2 M695.6 61 v3.2 M685.6 64.9 l2.3 2.3" stroke="#ff1010" stroke-width="1.2"/>
</g>
<!-- doc axis -->
<use href="#docic" transform="translate(693,81)"/>
<use href="#axis3" transform="translate(702.5,94.8)"/>
<!-- hand doc -->
<g>
<rect x="739.5" y="86.5" width="22.5" height="20" fill="url(#gDoc)" stroke="#7f93b5" stroke-width=".9"/>
<path d="M741.5 94.5 h2 m1.5 0 h2.5 M741.5 97.5 h2 m1.5 0 h2.5 M741.5 100.5 h2 m1.5 0 h2.5 M741.5 103.5 h2 m1.5 0 h2.5" stroke="#7f9fc8" stroke-width="1"/>
<use href="#axis3" transform="translate(754.6,100) scale(.95)"/>
<rect x="762.2" y="81.2" width="3.8" height="11.6" fill="#2f6796"/>
<path d="M762.4 82 C758 80.5 752.5 81 749 83.5 C746 86 743.5 89 742.3 91 C742.3 92 743.5 92.3 744.6 91.6 L750 87.5 L749.5 90.5 C750 93 752 94 753.5 93.5 L756 93.8 C758.5 93.5 760 91.5 762.4 91.2 Z" fill="#ead69e" stroke="#a89050" stroke-width=".6"/>
<path d="M751.5 88.5 L753.5 92.5 M754 87.5 L756.2 92 M756.8 86.8 L758.8 90.5" stroke="#a89050" stroke-width=".6" fill="none"/>
</g>
<!-- X doc -->
<g opacity=".55"><use href="#docic" transform="translate(781,81)"/><use href="#axis3" transform="translate(790.5,94.8)"/></g>
<path d="M775 82 L786.5 93.5 M786 81.5 L775.5 94" stroke="#f28a80" stroke-width="2.2" stroke-linecap="round" opacity=".85"/>
<!-- heat map -->
<g>
<path d="M845 61.5 L856 55.5 L868 59 L867.5 63 L858.5 72.5 L845.5 65.5 Z" fill="#1f86e8"/>
<path d="M845 61.5 L858.5 68.5 L868 59 L867.5 63 L858.5 72.5 L845.5 65.5 Z" fill="#1268c8"/>
<ellipse cx="856.4" cy="61" rx="7.8" ry="4.2" fill="#f01a10"/>
<ellipse cx="856.4" cy="59.6" rx="6.8" ry="3.7" fill="#ff9a10"/>
<ellipse cx="856.4" cy="58" rx="5.8" ry="3.2" fill="#e8f020"/>
<ellipse cx="856.4" cy="56.3" rx="4.9" ry="2.8" fill="#20d040"/>
<ellipse cx="856.4" cy="54.6" rx="4" ry="2.4" fill="#18d8e8"/>
<path d="M853.2 52.5 V54 C853.2 56 859.6 56 859.6 54 V52.5 Z" fill="#1a40e8"/>
<ellipse cx="856.4" cy="52.5" rx="3.2" ry="1.6" fill="#2a30ff"/>
<rect x="869.6" y="47.6" width="3" height="25" fill="#fff" stroke="#000" stroke-width=".9"/>
<rect x="870" y="48" width="2.2" height="4.6" fill="#2020e0"/><rect x="870" y="53" width="2.2" height="4.6" fill="#10d8e8"/><rect x="870" y="58" width="2.2" height="4.6" fill="#10b020"/><rect x="870" y="63" width="2.2" height="4.6" fill="#f0e010"/><rect x="870" y="68" width="2.2" height="4.2" fill="#e81010"/>
<rect x="867.6" y="58" width="2" height="4.6" fill="#e020e0"/>
<path d="M867.2 47.6 h2.4 M867.2 52.8 h2.4 M867.2 57.8 h2.4 M867.2 62.8 h2.4 M867.2 67.8 h2.4 M867.2 72.6 h2.4" stroke="#000" stroke-width=".8"/>
</g>
<!-- CNC panel -->
<g>
<rect x="886.7" y="47.4" width="27.2" height="25.4" rx="1.2" fill="url(#gCnc)" stroke="#3a3a3a" stroke-width=".6"/>
<rect x="889.6" y="49.8" width="13.6" height="11.2" rx="1.5" fill="#8a8a8a"/>
<rect x="891" y="51" width="10.8" height="8.6" rx="1" fill="#eef4ee"/>
<path d="M892.5 58 L894 53.5 L897.5 52 M893 57.5 H900 M894.5 55 L899.5 54.5" stroke="#30d050" stroke-width="1.2" fill="none"/>
<path d="M897 56.2 h3.5" stroke="#e040d0" stroke-width=".7"/>
<g fill="#e8e8e8"><circle cx="889.7" cy="66.2" r=".7"/><circle cx="891.7" cy="66.2" r=".7"/><circle cx="893.7" cy="66.2" r=".7"/><circle cx="889.7" cy="68.6" r=".7"/><circle cx="891.7" cy="68.6" r=".7"/><circle cx="893.7" cy="68.6" r=".7"/><circle cx="896.7" cy="66.2" r=".7"/><circle cx="898.7" cy="66.2" r=".7"/><circle cx="896.7" cy="68.6" r=".7"/><circle cx="898.7" cy="68.6" r=".7"/></g>
<path d="M902.5 65.2 v4.4 M900.3 67.4 h4.4" stroke="#d8d8d8" stroke-width="1.5"/>
<circle cx="907.4" cy="50.2" r=".9" fill="#20e030"/><circle cx="911.4" cy="50.2" r=".9" fill="#f02020"/>
<circle cx="909.4" cy="56" r="2.6" fill="#d0d0d0" stroke="#2a2a2a" stroke-width=".7"/><path d="M907.6 56.6 h3.6" stroke="#2a2a2a" stroke-width=".9"/>
<rect x="906.4" y="59.8" width="6" height="5.2" rx=".8" fill="#f0c020"/><circle cx="909.4" cy="62.4" r="1.9" fill="#f02010"/>
<circle cx="907.4" cy="67.6" r=".9" fill="#20e030"/><circle cx="911.4" cy="67.6" r=".9" fill="#f02020"/>
</g>
<!-- caliper -->
<g>
<path d="M845.2 106 L845.8 101.5 L861.5 81.5 L864.5 82.5 L853 100 Z" fill="url(#gCal)" stroke="#5f82ad" stroke-width=".4"/>
<path d="M859.8 80.5 L866 83.5 L872.2 89.5 L870.5 89.5 L862.5 84.8 Z" fill="#27487c"/>
<path d="M855.5 86.5 L863 88 L870 92.5 L868 92.6 L861.5 90.2 L857 91.5 Z" fill="#2f558c"/>
<path d="M858 79.8 L860.5 80 L862 83 L859.8 84 Z" fill="#3a5f94"/>
</g>
<!--/I4-->
<!--ICONS-->
</svg>
<span class="t" style="left:702px;top:12px;font-size:11px;letter-spacing:-.2px;color:#111">Глобальная СК</span>
</div>

<!-- LEFT PANEL -->
<div id="left" class="abs">
</div>

<!-- LEFT TOP -->
<svg width="498" height="230" viewBox="0 113 498 230" style="left:0;top:113px">
<defs>
<radialGradient id="gKnob" cx=".4" cy=".35" r=".7"><stop offset="0" stop-color="#8aa4ee"/><stop offset=".5" stop-color="#4a66c4"/><stop offset="1" stop-color="#1f2c6a"/></radialGradient>
<linearGradient id="gPlay" x1="0" y1="0" x2="1" y2="1"><stop offset="0" stop-color="#5fe03a"/><stop offset="1" stop-color="#087a08"/></linearGradient>
<linearGradient id="gRowSel" x1="0" y1="0" x2="0" y2="1"><stop offset="0" stop-color="#f4f8fd"/><stop offset="1" stop-color="#e6eff9"/></linearGradient>
<linearGradient id="gMachG" x1="0" y1="0" x2="1" y2="0"><stop offset="0" stop-color="#3f7a30"/><stop offset=".5" stop-color="#86b870"/><stop offset="1" stop-color="#3f7a30"/></linearGradient>
<linearGradient id="gMachT" x1="0" y1="0" x2="1" y2="0"><stop offset="0" stop-color="#0f7a7a"/><stop offset=".5" stop-color="#2aa8a0"/><stop offset="1" stop-color="#0f7a7a"/></linearGradient>
<g id="mach"><path d="M1.5 17.5 C1.5 9.5 2 3.5 5.5 1 C8 -.3 11.5 0 14 .1 V7.8 H11.5 V5.3 H9 V12.3 H15.5 V17.5 Z"/></g>
<g id="sdoc"><path d="M.5 .5 H6.5 L10.5 4.5 V14.5 H.5 Z" fill="url(#gDoc)" stroke="#8a99b3" stroke-width=".9"/><path d="M6.5 .5 V4.5 H10.5 Z" fill="#cdd8ea" stroke="#8a99b3" stroke-width=".6"/></g>
<radialGradient id="gB0" cx=".38" cy=".32" r=".75"><stop offset="0" stop-color="#4fd84f"/><stop offset=".4" stop-color="#0a9a0a"/><stop offset="1" stop-color="#045a04"/></radialGradient>
<radialGradient id="gB1" cx=".38" cy=".32" r=".75"><stop offset="0" stop-color="#5a5ad8"/><stop offset=".4" stop-color="#0a0a8a"/><stop offset="1" stop-color="#02024a"/></radialGradient>
<radialGradient id="gB2" cx=".38" cy=".32" r=".75"><stop offset="0" stop-color="#d85a5a"/><stop offset=".4" stop-color="#8a0a0a"/><stop offset="1" stop-color="#4a0202"/></radialGradient>
<radialGradient id="gB3" cx=".38" cy=".32" r=".75"><stop offset="0" stop-color="#d0d05a"/><stop offset=".4" stop-color="#86860a"/><stop offset="1" stop-color="#484802"/></radialGradient>
<radialGradient id="gB4" cx=".38" cy=".32" r=".75"><stop offset="0" stop-color="#5ad0d0"/><stop offset=".4" stop-color="#0a8686"/><stop offset="1" stop-color="#024848"/></radialGradient>
<radialGradient id="gB5" cx=".38" cy=".32" r=".75"><stop offset="0" stop-color="#d05ad0"/><stop offset=".4" stop-color="#860a86"/><stop offset="1" stop-color="#480248"/></radialGradient>
<g id="opframe"><rect x=".5" y=".5" width="19" height="19" rx="2" fill="#dcecfd" stroke="#5aa6ff" stroke-width="1"/><path d="M0 0h1v1h-1z M19 0h1v1h-1z M0 19h1v1h-1z M19 19h1v1h-1z" fill="#ff30d0"/></g>
<g id="tmill"><path d="M0 0 H4.6 V10 L2.3 12.2 L0 10 Z" fill="#8a8a8a"/><path d="M1 0 H3.6 V10 L2.3 11.3 L1 10 Z" fill="#f6c21a"/><path d="M1 3 L3.6 1.2 M1 6 L3.6 4.2 M1 9 L3.6 7.2" stroke="#8a6a10" stroke-width=".8"/></g>
<g id="opRough"><use href="#opframe"/><rect x="4" y="10.5" width="13.5" height="5.5" fill="#10e8f0"/><path d="M3 11 V15 H7" fill="none" stroke="#111" stroke-width="1.3"/><path d="M3 16.6 H17.5" stroke="#1a30e0" stroke-width="1.2"/><use href="#tmill" transform="translate(5,1.6)"/><rect x="11.6" y="2.2" width="6" height="6" fill="#fff" stroke="#1a30e0" stroke-width="1.1"/><rect x="13.7" y="4.3" width="1.9" height="1.9" fill="#1a30e0"/></g>
<g id="opCont"><use href="#opframe"/><path d="M10.5 4 L17.5 10 L12.5 16 L5.5 10 Z" fill="#f4f8fd" stroke="#7a7a7a" stroke-width=".8"/><path d="M4 10 V3.5" stroke="#10a010" stroke-width="1.2"/><path d="M4 2.2 L5.6 5 H2.4 Z" fill="#10a010"/><path d="M4 10 L8.5 5.5" stroke="#e01010" stroke-width="1.2"/><path d="M9.6 4.4 L8.9 7.3 L6.7 5.1 Z" fill="#e01010"/><path d="M4 10 L7.5 14" stroke="#1a30e0" stroke-width="1.2"/><circle cx="6" cy="12.2" r="1" fill="#1a30e0"/><use href="#tmill" transform="translate(8.3,8) scale(.9,.8)"/></g>
<g id="opHole"><use href="#opframe"/><path d="M2.5 2.5 H6.8 V7.5 L4.6 10 L2.5 7.5 Z" fill="#f0c830" stroke="#7a6a2a" stroke-width=".7"/><path d="M9.3 3 V9" stroke="#10a010" stroke-width="1.2"/><path d="M9.3 10 L7.9 7.4 H10.7 Z" fill="#10a010"/><path d="M11.8 9.5 V3.5" stroke="#f03020" stroke-width="1.2"/><path d="M11.8 2.4 L10.4 5 H13.2 Z" fill="#f03020"/><path d="M14.3 3 V12" stroke="#10a010" stroke-width="1.2"/><path d="M14.3 13 L12.9 10.4 H15.7 Z" fill="#10a010"/><path d="M16.6 12 V3.5" stroke="#f03020" stroke-width="1.2"/><path d="M16.6 2.4 L15.2 5 H18 Z" fill="#f03020"/><rect x="2.5" y="12.6" width="15.5" height="5" fill="#8fa6cc"/><rect x="2.5" y="12.6" width="4.5" height="5" fill="#e4e9f2"/></g>
</defs>
<!-- row 1 -->
<g>
<g stroke="#9a9a9a" stroke-width="1.1" stroke-linecap="round"><path d="M12.8 121.2v-1.8M17 122.4l.9-1.5M20 125.4l1.5-.9M21.2 129.6h1.8M20 133.8l1.5.9M8.6 122.4l-.9-1.500M5.600 125.400l-1.500-.9M4.400 129.600h-1.800M5.600 133.800l-1.500.9M8.400 136.600l-.8 1.300M17.200 136.600l.8 1.300"/></g>
<ellipse cx="14" cy="131.400" rx="7.400" ry="7" fill="#2a2a2a" opacity=".6"/>
<circle cx="13" cy="129.800" r="7.200" fill="url(#gKnob)"/><circle cx="16.400" cy="128" r="1.200" fill="#18e040"/>
</g>
<circle cx="110.3" cy="129.2" r="9" fill="#fbfbfb" stroke="#c2c2c2" stroke-width="1"/>
<path d="M107.2 123.2 L116.2 129.2 L107.2 135.2 Z" fill="url(#gPlay)" stroke="#0a7a0a" stroke-width=".5"/>
<path d="M161.5 124.5 L173.5 134.500 M173.500 124 L161.500 135" stroke="#e82a1a" stroke-width="3.400" stroke-linecap="round"/>
<!-- new -->
<g><path d="M408.500 121.500 H416.500 L421.500 126.500 V138.500 H408.500 Z" fill="url(#gDoc)" stroke="#8a99b3" stroke-width=".9"/><path d="M416.500 121.500 V126.500 H421.500 Z" fill="#cdd8ea" stroke="#8a99b3" stroke-width=".6"/>
<g stroke="#f5d21a" stroke-width="1.500" stroke-linecap="round"><path d="M408 119 V130 M402.500 124.500 H413.500 M404 120.500 L412 128.500 M412 120.500 L404 128.500"/></g><circle cx="408" cy="124.500" r="1.800" fill="#fff8b0"/></g>
<path d="M483 127.500 h7 l-3.500 4 z" fill="#8a8a8a"/>
<!-- row 2 -->
<g><path d="M6.500 146.500 H15.500 L20.500 151.500 V164.500 H6.500 Z" fill="url(#gDoc)" stroke="#8a99b3" stroke-width=".9"/><path d="M15.500 146.500 V151.500 H20.500 Z" fill="#cdd8ea" stroke="#8a99b3" stroke-width=".6"/>
<path d="M8.500 150.500 l1.500 -1 M8.500 154.500 l1.500 -1 M8.500 158.500 l1.500 -1 M11.500 151.500 h3" stroke="#3a8ae0" stroke-width="1"/>
<use href="#mach" transform="translate(11,152.500) scale(.6,.62)" fill="url(#gMachT)"/><path d="M11 163.800 h9" stroke="#2a50d0" stroke-width="1.200"/></g>
<g font-family="Liberation Mono,monospace" font-weight="bold" font-size="7" fill="#b040f0"><text x="55.800" y="150.800" textLength="15.500" lengthAdjust="spacingAndGlyphs">%001</text><text x="55.800" y="157.600" textLength="15.500" lengthAdjust="spacingAndGlyphs">N1G0</text><text x="55.800" y="164.500" textLength="8" lengthAdjust="spacingAndGlyphs">N2</text></g>
<use href="#mach" transform="translate(63.500,154) scale(.6,.6)" fill="url(#gMachT)"/><path d="M63.500 164.600 h10" stroke="#2a50d0" stroke-width="1.200"/>
<path d="M13 171.500 H485" stroke="#8fa8cc" stroke-width="1"/>
<!-- machine row -->
<use href="#mach" transform="translate(2.500,176.500) scale(1.020,1)" fill="url(#gMachG)" stroke="#3a6a2a" stroke-width=".5"/>
<rect x="11.800" y="182" width="2" height="4.500" fill="#c8c8d0"/><rect x="8.500" y="188" width="9.500" height="1.800" fill="#9a8a9a"/><rect x="2.500" y="193.800" width="17" height="2" fill="#3a3a3a"/>
<use href="#sdoc" transform="translate(459,178)"/>
<!-- selected row -->
<rect x="1.500" y="197.500" width="493" height="21" fill="url(#gRowSel)" stroke="#b8bcc4" stroke-width="1"/>
<!-- tree lines -->
<path d="M9.500 196 V317.500 M9.500 207.500 H18 M9.500 229.500 H18 M9.500 251.500 H18 M9.500 273.500 H18 M9.500 295.500 H18 M9.500 317.500 H18" stroke="#9a9a9a" stroke-width="1" fill="none"/>
<use href="#opRough" transform="translate(18,198)"/>
<use href="#opRough" transform="translate(18,220)"/>
<use href="#opRough" transform="translate(18,242)"/>
<use href="#opCont" transform="translate(18,264)"/>
<use href="#opHole" transform="translate(18,286)"/>
<use href="#opCont" transform="translate(18,308)"/>
<!-- status docs & balls -->
<g><use href="#sdoc" transform="translate(459,200)" opacity=".9"/><path d="M461 205 h6 M461 208 h6 M461 211 h6" stroke="#9aa8c0" stroke-width=".8"/><path d="M457.500 206.500 L462.500 213 L470.500 201" fill="none" stroke="#4c4c4c" stroke-width="2.400" stroke-linejoin="round"/></g>
<use href="#sdoc" transform="translate(459,222)"/><use href="#sdoc" transform="translate(459,244)"/><use href="#sdoc" transform="translate(459,266)"/><use href="#sdoc" transform="translate(459,288)"/><use href="#sdoc" transform="translate(459,310)"/>
<circle cx="486" cy="207" r="6.200" fill="url(#gB0)"/>
<circle cx="486" cy="229" r="6" fill="url(#gB1)"/>
<circle cx="486" cy="251" r="6" fill="url(#gB2)"/>
<circle cx="486" cy="273" r="6" fill="url(#gB3)"/>
<circle cx="486" cy="295" r="6" fill="url(#gB4)"/>
<circle cx="486" cy="317" r="6" fill="url(#gB5)"/>
</svg>
<span class="t" style="left:26px;top:123.400px;letter-spacing:.25px">Параметры</span>
<span class="t" style="left:123.700px;top:123.400px">Пуск</span>
<span class="t" style="left:181px;top:123.400px">Сброс</span>
<span class="t" style="left:427.600px;top:123.400px">Новая...</span>
<span class="t" style="left:27.600px;top:148.600px">РТК</span>
<span class="t" style="left:80.500px;top:148.600px">Постпроцессор</span>
<span class="t" style="left:25.800px;top:178.800px">3-х координатный фрезерный станок</span>
<span class="t" style="left:41.8px;top:200.800px;letter-spacing:.24px">Черновая послойная</span>
<span class="t" style="left:41.8px;top:222.800px;letter-spacing:.24px">Черновая послойная2</span>
<span class="t" style="left:41.8px;top:244.800px;letter-spacing:.24px">Черновая послойная3</span>
<span class="t" style="left:41.8px;top:266.800px;letter-spacing:.24px">2D Контур</span>
<span class="t" style="left:41.8px;top:288.800px;letter-spacing:.24px">Обработка отверстий</span>
<span class="t" style="left:41.8px;top:310.800px;letter-spacing:.24px">2D Контур2</span>
<!-- /LEFT TOP -->

<!-- LEFT BOTTOM -->
<svg width="498" height="300" viewBox="0 370 498 300" style="left:0;top:370px">
<defs>
<linearGradient id="gMachB" x1="0" y1="0" x2="1" y2="0"><stop offset="0" stop-color="#1a6aa8"/><stop offset=".5" stop-color="#5fb8e8"/><stop offset="1" stop-color="#1a6aa8"/></linearGradient>
<linearGradient id="gStB" x1="0" y1="0" x2="1" y2="0"><stop offset="0" stop-color="#5f8ab8"/><stop offset=".35" stop-color="#e4f0fb"/><stop offset=".65" stop-color="#8fb4d8"/><stop offset="1" stop-color="#4f7aa8"/></linearGradient>
<linearGradient id="gRedH" x1="0" y1="0" x2="1" y2="0"><stop offset="0" stop-color="#e80020"/><stop offset=".5" stop-color="#ff8aa0"/><stop offset="1" stop-color="#e80020"/></linearGradient>
<linearGradient id="gBlkT" x1="0" y1="0" x2="1" y2="1"><stop offset="0" stop-color="#5f8fc0"/><stop offset=".5" stop-color="#e8f2fb"/><stop offset="1" stop-color="#6f9ac8"/></linearGradient>
<g id="hat"><path d="M0 17.400 V12.800 C2.500 12.600 4.600 11.500 5 9 V3.500 C5 .8 8 0 11 0 C14 0 17 .8 17 3.500 V9 C17.400 11.500 19.500 12.600 22 12.800 V17.400 Z"/></g>
<g id="bolt"><path d="M0 11 L3.200 6.800 L2.200 6 L6.500 2.800 L5.800 4.600 L12 0 L8.600 4.600 L9.600 5.400 L5.200 8.400 L6 6.800 Z" fill="#1a8ae0" stroke="#0a6ac0" stroke-width=".4"/></g>
<g id="minus"><rect x=".5" y=".5" width="8" height="8" fill="#fff" stroke="#8a8a8a"/><path d="M2.200 4.500 h4.600" stroke="#000" stroke-width="1"/></g>
</defs>
<!-- tab icons -->
<use href="#mach" transform="translate(14.500,373.200) scale(1.020,1.050)" fill="url(#gMachB)"/>
<rect x="24.200" y="377" width="2" height="5" fill="#d8d8c8"/><rect x="20.800" y="384.600" width="10" height="2" fill="#a8a090"/><rect x="15" y="391" width="16" height="1.800" fill="#4a5a5a"/>
<rect x="6.300" y="395" width="33.500" height="2" fill="#2a6ab8"/>
<g><use href="#hat" transform="translate(41.200,374.200)" fill="url(#gStB)" stroke="#e81818" stroke-width="1.200"/><path d="M47.500 377 V391.500 M56.800 377 V391.500" stroke="#5a86b4" stroke-width=".7"/><rect x="48" y="376.500" width="8.500" height="15.200" fill="url(#gStB)"/><path d="M41.800 391.700 H62.600" stroke="#6a8ab0" stroke-width="1.200"/></g>
<g>
<g stroke="#a8a8a8" stroke-width="1.100" stroke-linecap="round"><path d="M81.400 374.200v-1.600M86.200 375.600l.9-1.400M89.600 379l1.400-.8M90.800 383.600h1.600M89.600 388.200l1.400.8M76.600 375.600l-.9-1.400M73.200 379l-1.400-.8M72 383.600h-1.600M73.200 388.200l-1.400.8M76.600 391.600l-.8 1.300"/></g>
<ellipse cx="82.400" cy="385.200" rx="7.400" ry="7" fill="#2a2a2a" opacity=".6"/>
<circle cx="81.400" cy="383.600" r="7.200" fill="url(#gKnob)"/><circle cx="84.600" cy="381.800" r="1.200" fill="#18e040"/>
</g>
<g>
<circle cx="109.800" cy="384" r="6.800" fill="#9cc0e4" stroke="#4a7cb4" stroke-width="1"/>
<g fill="#8ab2dc" stroke="#4a7cb4" stroke-width=".7"><circle cx="109.800" cy="376.200" r="1.900"/><circle cx="109.800" cy="391.800" r="1.900"/><circle cx="102" cy="384" r="1.900"/><circle cx="117.600" cy="384" r="1.900"/><circle cx="104.300" cy="378.500" r="1.900"/><circle cx="115.300" cy="378.500" r="1.900"/><circle cx="104.300" cy="389.500" r="1.900"/><circle cx="115.300" cy="389.500" r="1.900"/></g>
<circle cx="109.800" cy="384" r="6.300" fill="#9cc0e4"/>
<circle cx="109.800" cy="384" r="4.600" fill="none" stroke="#d4e6f6" stroke-width="1.400"/>
<circle cx="109.800" cy="384" r="3.200" fill="#fff" stroke="#4a7cb4" stroke-width=".8"/>
</g>
<g fill="none"><path d="M130.300 379 V374.600 H148.700 V379" stroke="#b01010" stroke-width="1" stroke-dasharray="2.600 1.400"/><path d="M130.300 379.500 V388 C130.300 393 136.500 393 136.500 388 V385.500 C136.500 381 142.500 381 142.500 385.500 V388 C142.500 393 148.700 393 148.700 388 V379.500" stroke="#2a6a4a" stroke-width="1"/></g>
<g><use href="#holder" transform="translate(168,374.200) scale(.78,.8)" fill="url(#gStB)" stroke="#5a7aa8" stroke-width=".5"/><use href="#mill" transform="translate(168,384.200) scale(.85,.68)" fill="url(#gGoldH)"/></g>
<g>
<path d="M187 375 h6.500" stroke="#d01010" stroke-width="1.600"/><path d="M187 377.800 h6.500" stroke="#e8c010" stroke-width="1.600"/><path d="M187 380.600 h6.500" stroke="#30b020" stroke-width="1.600"/>
<text x="194.800" y="381.800" font-size="10" font-family="Liberation Sans,sans-serif" fill="#1a5a3a">F</text><text x="201.600" y="381.800" font-size="10" font-family="Liberation Sans,sans-serif" fill="#8ac8a0">1</text>
<path d="M187.500 387.500 C187.500 383.500 193 383.500 193 387.500 V390" fill="none" stroke="#2a7ac8" stroke-width="1"/><path d="M193 392 L191 388.800 H195 Z" fill="#1a4a8a"/>
<text x="195.200" y="392.200" font-size="10" font-family="Liberation Sans,sans-serif" fill="#2a7ab8">S</text><text x="202.200" y="392.200" font-size="10" font-family="Liberation Sans,sans-serif" fill="#8ab8e0">2</text>
</g>
<g stroke-width="1.100"><path d="M216.500 375 h7 M216.500 378 h7 M216.500 381 h7" stroke="#1a4a3a"/><path d="M227.500 375 h7.500 M227.500 378 h7.500 M227.500 381 h7.500" stroke="#3a9a7a"/><path d="M216.500 385 h7 M216.500 388 h7 M216.500 391 h7 M227.500 385 h7.500 M227.500 388 h7.500 M227.500 391 h7.500" stroke="#3a9a7a"/><path d="M216 378 h1.500 M227 378 h1.500 M216 388 h1.500 M227 388 h1.500" stroke="#10e8f0"/></g>
<g><path d="M251 373.700 H259 L264.500 379.200 V387 L259 392.500 H251 L245.500 387 V379.200 Z" fill="#bc5a70" stroke="#a84860" stroke-width=".6"/><text x="249.300" y="386.600" font-size="9" font-weight="bold" font-family="Liberation Sans,sans-serif" fill="#fff" textLength="11.500" lengthAdjust="spacingAndGlyphs">M1</text></g>
<g><path d="M274 386 C274 383 278 382.500 278 382.500 V376.500 C278 373.500 290 373.500 290 376.500 V382.500 C290 382.500 294 383 294 386 V389.500 C294 393.500 274 393.500 274 389.500 Z" fill="url(#gStB)" stroke="#5a86b4" stroke-width=".5"/><ellipse cx="284" cy="376.600" rx="6" ry="2.300" fill="#d4e6f6" stroke="#6a96c4" stroke-width=".5"/><ellipse cx="284" cy="376.800" rx="3" ry="1.200" fill="#9abce0"/><path d="M274 386 C274 389.500 294 389.500 294 386" fill="none" stroke="#5a86b4" stroke-width=".6"/></g>
<g><use href="#hat" transform="translate(302.800,374.200) scale(.92,1)" fill="url(#gStB)" stroke="#4a86b4" stroke-width=".9"/><path d="M309 391.700 V378.500 C309 375.500 317 375.500 317 378.500 V391.700 Z" fill="url(#gRedH)"/></g>
<g stroke="#3a6aa0" stroke-width=".4" stroke-linejoin="round"><path d="M331.300 379 L343.500 373.200 L353 378.500 L339.500 384.500 Z" fill="url(#gBlkT)"/><path d="M331.300 379 L339.500 384.500 V392.800 L331.300 386 Z" fill="#2a5a98"/><path d="M339.500 384.500 L353 378.500 V386 L339.500 392.800 Z" fill="url(#gBlkT)"/></g>
<g>
<path d="M361 377.500 L367 373.500 L371 374.500 V376.500 L373.500 375 L378.500 377.500 C380.500 379 381 383 380.500 388 L376 392.500 L369 389 L365.500 390.500 L361 387.500 Z" fill="#1f2a38"/>
<path d="M361 377.500 L367 373.500 L371 374.500 L365 379 Z" fill="#cfe2f4"/><path d="M361 377.500 L365 379 V390 L361 387.500 Z" fill="#5a8ac0"/>
<path d="M367 380.500 L373.500 375.200 L378.500 377.500 C376 378 371 380.500 369.500 382 Z" fill="#d4e6f6"/><path d="M367 380.500 L369.500 382 V389 L367 388 Z" fill="#6a9ad0"/>
<path d="M369.500 382 C371.500 380 376 378 378.800 378 C380.500 379.500 381 383 380.500 388 L376 392.500 L369.500 389 Z" fill="#3a76b8"/><path d="M370 385 L380 382 V386 L370 389.500 Z" fill="#14202c"/>
<path d="M375 388 L379.500 389.500" stroke="#e0e8f0" stroke-width="1.600"/><path d="M380.200 389 L379 394.500" stroke="#1a2a3a" stroke-width="1.500"/>
</g>
<!-- grid lines -->
<path d="M3 419.500 H495" stroke="#dcdcdc" stroke-width="1"/>
<path d="M2 441.500 H495" stroke="#dcdcdc" stroke-width="1"/>
<path d="M273.500 421 V670" stroke="#dcdcdc" stroke-width="1"/>
<!-- property icons -->
<use href="#minus" x="4" y="428"/><use href="#minus" x="4" y="485"/><use href="#minus" x="4" y="561"/>
<g><path d="M15 437 L24 428" stroke="#1a8ae0" stroke-width="2.800" stroke-linecap="round"/><path d="M15.300 436.700 L23.500 428.500" stroke="#7ac8ff" stroke-width=".8"/><path d="M22.500 426.500 C24 424 27 423.800 28.500 425.200 L25.800 427.800 L27.200 429.200 L29.200 427.200 C29.500 429.500 28 431.500 25.500 431 Z" fill="#e8eef4" stroke="#5a6a7a" stroke-width=".7"/></g>
<g><path d="M26.500 444.500 H24.500 V448 L23.500 450 L24.500 452 V456 H26.500" fill="none" stroke="#111" stroke-width="1.200"/><path d="M27 448 L36 445.500 L38.500 450.500 L29.500 455 Z" fill="#1a8ae0" stroke="#0a5ab0" stroke-width=".6"/><path d="M28.500 449 L36.500 446.500" stroke="#8ad0ff" stroke-width="1"/><path d="M31 443.800 H37" stroke="#e01010" stroke-width="1" stroke-dasharray="2 1"/><path d="M39 443.800 L36.200 442.200 V445.400 Z" fill="#e01010"/></g>
<g><circle cx="31.300" cy="469.800" r="5.800" fill="#8a8a9a"/><path d="M31.300 469.800 V464 A5.800 5.800 0 0 1 37.100 469.800 Z M31.300 469.800 V475.600 A5.800 5.800 0 0 1 25.500 469.800 Z" fill="#f0f0f4"/><circle cx="31.300" cy="469.800" r="5.800" fill="none" stroke="#7a7a8a" stroke-width=".8"/></g>
<g fill="none" stroke="#f01010" stroke-width="1.100"><path d="M20.500 483.500 H17 V492" stroke-dasharray="2.200 1.200"/><path d="M17 495.500 L15.200 492.200 H18.800 Z" fill="#f01010" stroke="none"/><path d="M22.500 495.500 V486 H26" stroke-dasharray="2.200 1.200"/><path d="M29.200 486 L26 484.200 V487.800 Z" fill="#f01010" stroke="none"/></g>
<g fill="none" stroke="#f01010" stroke-width="1.100"><path d="M35.500 502 H28.500 V510" stroke-dasharray="2.200 1.200"/><path d="M28.500 514 L26.500 510.400 H30.500 Z" fill="#f01010" stroke="none"/></g>
<g fill="none" stroke="#f01010" stroke-width="1.100"><path d="M28.500 533.500 V523 H33" stroke-dasharray="2.200 1.200"/><path d="M36.600 523 L33 521 V525 Z" fill="#f01010" stroke="none"/></g>
<g><path d="M27.500 541 L31.500 539 L35.800 541 L36.800 545.500 L33 548.500 L28.500 547.500 L26.500 544 Z" fill="#7ac0f0" stroke="#111" stroke-width="1"/><path d="M24.500 541 V551.500" stroke="#10a010" stroke-width="1.200"/><path d="M24.500 551.500 H32" stroke="#e01010" stroke-width="1.200"/><path d="M26 545 H31.500 V551" fill="none" stroke="#e01010" stroke-width=".9"/><path d="M34 539 L37 538" stroke="#e01010" stroke-width="1" stroke-dasharray="1.500 1"/><path d="M38.600 539.800 L37.800 537 L35.600 538.500 Z" fill="#e01010"/></g>
<use href="#bolt" x="16.500" y="559.300"/><use href="#bolt" x="25" y="578.300"/><use href="#bolt" x="25" y="597.300"/><use href="#bolt" x="25" y="616.300"/>
</svg>
<span class="t" style="left:10.500px;top:402.100px;color:#1f5fa8">Настройка</span>
<span class="t pg" style="left:32.800px;top:426.0px;color:#6b0f0f">Основные параметры</span>
<span class="t pg" style="left:41.600px;top:445.0px">Установ</span>
<span class="t pg" style="left:41.600px;top:464.0px">СК заготовки</span>
<span class="t pg" style="left:32.800px;top:483.0px;color:#6b0f0f">Подвод/Отвод</span>
<span class="t pg" style="left:41.600px;top:502.0px">Подвод (промежуточные точки)</span>
<span class="t pg" style="left:41.600px;top:521.0px">Отвод (промежуточные точки)</span>
<span class="t pg" style="left:41.600px;top:540.0px">Позиция смены инструмента</span>
<span class="t pg" style="left:32px;top:559.0px;color:#6b0f0f">Линейные оси</span>
<span class="t pg" style="left:41.200px;top:578.0px">X (Позиция оси X)</span>
<span class="t pg" style="left:41.200px;top:597.0px">Y (Позиция оси Y)</span>
<span class="t pg" style="left:41.200px;top:616.0px">Z (Позиция оси Z)</span>
<span class="t pv" style="left:278.500px;top:445.0px">По предыдущей операции</span>
<span class="t pv" style="left:278.500px;top:464.0px">По предыдущей операции</span>
<span class="t pv" style="left:278.500px;top:502.0px">Из станка</span>
<span class="t pv" style="left:278.500px;top:521.0px">Из станка</span>
<span class="t pv" style="left:278.500px;top:540.0px">По предыдущей операции</span>
<span class="t pn" style="left:278.500px;top:578.0px">0</span>
<span class="t pn" style="left:278.500px;top:597.0px">0</span>
<span class="t pn" style="left:278.500px;top:616.0px">40.9</span>
<!-- /LEFT BOTTOM -->

<!-- VIEWPORT -->
<!-- VIEWSVG -->
<svg width="644" height="557" viewBox="498 113 644 557" style="left:498px;top:113px">
<defs>
<linearGradient id="gSky" x1="0" y1="0" x2="0" y2="1"><stop offset="0" stop-color="#99b3d1"/><stop offset="1" stop-color="#e6edf5"/></linearGradient>
<linearGradient id="gCone" x1="0" y1="0" x2="1" y2="0"><stop offset="0" stop-color="#0c0c0c"/><stop offset=".3" stop-color="#3a3a3a"/><stop offset=".55" stop-color="#1c1c1c"/><stop offset="1" stop-color="#050505"/></linearGradient>
<linearGradient id="gDiscSide" x1="0" y1="0" x2="1" y2="0"><stop offset="0" stop-color="#2e8a2e"/><stop offset=".4" stop-color="#1f7a1f"/><stop offset="1" stop-color="#0c4f0c"/></linearGradient>
<linearGradient id="gFrontL" x1="0" y1="0" x2="1" y2="0"><stop offset="0" stop-color="#8a6c5a"/><stop offset=".4" stop-color="#987a67"/><stop offset="1" stop-color="#846655"/></linearGradient>
<linearGradient id="gRightF" x1="0" y1="0" x2="1" y2="0"><stop offset="0" stop-color="#6f5446"/><stop offset="1" stop-color="#8d6e5c"/></linearGradient>
<clipPath id="cpTop"><path d="M675 313 L1070 301 L1027 460 L637 473 Z"/></clipPath>
<clipPath id="cpW"><path id="Wp" d="M716 321.800 L1031 311.600 C1046 311.800 1057 322 1059 338 L1056 362 L1034 448 C1032 456 1029 459.300 1026.600 459.400 L972 461.800 L747 468.600 L678 469.700 C660 467 649 458 650.500 447 L673 353.700 C677 336 694 323 716 321.800 Z"/></clipPath>
</defs>
<rect x="498" y="113" width="644" height="557" fill="url(#gSky)"/>
<rect x="498" y="113" width="644" height="1" fill="#8e99a8"/>
<rect x="498" y="113" width="1" height="557" fill="#6e6e6e"/>

<!-- BOX -->
<g id="box">
<!-- right face -->
<path d="M1070 301.500 L1090 393 L1051 552 L1027 460 Z" fill="#86685a"/>
<path d="M1052 366 C1058 366 1061 372 1061 380 L1062.400 416 L1044 524 L1051 552 L1027 460 Z" fill="#6b5246"/>
<path d="M1058.500 370 C1066 372 1071 378 1072.500 390 L1078.500 416 L1060.400 521 L1051 552 L1044 524 L1062.400 416 L1060 392 Z" fill="#4a3228"/>
<path d="M1058.400 369.600 C1066 372 1070 378 1070.500 390 L1070.500 400" fill="none" stroke="#3a2820" stroke-width=".7" opacity=".8"/>
<g fill="#9c7e6a" opacity=".75"><path d="M1073 316 l4 12 l-6 -3 z M1076 332 l4 13 l-7 -4 z M1079 349 l4 13 l-7 -4 z M1082 366 l4 13 l-7 -4 z M1085 383 l3 10 l-6 -3 z M1084 410 l3 -12 l-6 9 z M1080 428 l3 -12 l-6 9 z M1076 446 l3 -12 l-6 9 z M1072 464 l3 -12 l-6 9 z M1068 482 l3 -12 l-6 9 z M1064 500 l3 -12 l-6 9 z M1060 518 l3 -12 l-5 9 z"/></g>
<!-- front face -->
<path d="M637 473 L1027 460 L1051 553 L656 563 Z" fill="#8f7160"/>
<path d="M637 473 L662 472 L672 562.600 L656 563 Z" fill="#a08370"/>
<g fill="#7d604f" opacity=".7"><path d="M640 478 L648 478 L646 492 L643 492 Z M644 497 L652 497 L650 511 L647 511 Z M648 516 L656 516 L654 530 L651 530 Z M652 535 L660 535 L658 549 L655 549 Z"/></g>
<path d="M658 474 L690 473 L704 557 C690 556 676 550 669 540 C663 530 661 510 658 474 Z" fill="url(#gFrontL)"/>
<path d="M688 476 L726 476 L733 523 L697 524.400 Z" fill="#846755"/>
<path d="M724 476 L745 476 L736 523 L732 523 Z" fill="#765843"/>
<path d="M745 476 L1027 461 L1036 500 C1030 508 1015 513 1000 513.500 L736 523 Z" fill="#98796a"/>
<path d="M659 475.500 L750 472.800 L749 481 L660 483.500 Z" fill="#917562" opacity=".85"/>
<path d="M697 524.400 L1000 513.500 C1018 513 1031 507 1037 499 L1048.500 546.800 L704 558 Z" fill="#7f6252"/>
<path d="M665 512 C672 520 682 524 697 524.400 L704 558 C690 557.500 676 551 669 540 Z" fill="#856755" opacity=".8"/>
<path d="M1000 513.500 C1018 513 1031 507 1037 499 L1048.500 546.800 L1012 548 Z" fill="#846654"/>
<path d="M656 563 L1051 553 L1049.500 547 L705 558 C690 557.500 676 551 669 541 L664 524 Z" fill="#b08d76"/>
<path d="M688 476 L704 557" stroke="#75594a" stroke-width=".6" fill="none"/>
<path d="M1000 513.500 L1012 546.500" stroke="#6f5444" stroke-width=".6" fill="none"/>
<!-- top face -->
<path d="M675 313 L1070 301 L1027 460 L637 473 Z" fill="#b3927c"/>
<g clip-path="url(#cpTop)">
<path d="M675 313 L1070 301 L1070 305 L679.500 317.500 L643 473 L637 473 Z" fill="#9d9db9"/>
<path d="M1059 330 L1070 301 L1027 460 L1030 440 Z" fill="#a08672"/>
<g fill="#a5876f"><path d="M668 350 l6 2 l-8 8 z M664 368 l6 2 l-8 8 z M660 386 l6 2 l-8 8 z M656 404 l6 2 l-8 8 z M652 422 l6 2 l-8 8 z M648 440 l6 2 l-8 8 z M672 332 l6 2 l-8 8 z"/></g>
</g>
<!-- part top inside W -->
<g clip-path="url(#cpW)">
<rect x="640" y="300" width="430" height="180" fill="#cdae94"/>
<path d="M788 300 L1075 300 L1075 360.500 L774.700 375 Z" fill="#a98c76"/>
<path d="M788 300 L1075 300 L1075 353 L776.700 366.500 Z" fill="#b0947c"/>
<path d="M788 300 L1075 300 L1075 324 L785 331.500 Z" fill="#a08470"/>
<path d="M1046 326 C1052 334 1054 346 1052 362 L1075 362 L1075 326 Z" fill="#a98c76" opacity=".6"/>
<path d="M783.600 319.300 L748 468.600 L752 468.600 L788 319.300 Z" fill="#b99c84"/>
</g>
<path d="M637 473 L1027 460" stroke="#b9a090" stroke-width="1"/>
</g>

<!-- white/gray thin lines -->
<g fill="none" stroke="#dcdcdc" stroke-width="1">
<use href="#Wp" stroke="#e4e0dc" stroke-width="1" opacity=".9"/>
<path d="M1053.500 373 L1041 420 C1036 436 1024 446 1010 450 C996 455 980 458.500 966 460.500" stroke="#d0ccc8" opacity=".8"/>
<path d="M757.600 321.500 L721.300 467.800" stroke="#d8d4d0"/>
<ellipse cx="720" cy="342.400" rx="12" ry="7.300" stroke="#e0d8d0" opacity=".85"/>
<ellipse cx="693.600" cy="447.700" rx="13" ry="8" stroke="#e0d8d0" opacity=".85"/>
</g>
<circle cx="720" cy="342.800" r="1.800" fill="#ddd6d0"/><circle cx="693.600" cy="448" r="1.800" fill="#ddd6d0"/>
<circle cx="1062" cy="309.500" r="2.200" fill="#e8e4e0"/><circle cx="1026.600" cy="459.600" r="2.200" fill="#e0dcd8"/>

<!-- green thin loops -->
<g fill="none" stroke="#2f8a2f" stroke-width="1.100">
<path d="M748 340.300 C730 341 712 346 701 364.400 L687.700 423.500 C686 433 692 445 710 446.400 L800 445 L900 444 L964.500 440 C990 437 1002 428 1005 414 L1019.400 354 C1020 343 1012 336 998 333 L905 335.500 Z"/>
<path d="M745 368.500 L976 361 L963.300 413.600 L731.500 420.800 Z"/>
<path d="M963.300 413.600 C964 425 966 445 970.500 466.600"/>
</g>
<!-- loop1 -->
<path d="M698.500 320 C684 323 674 332 670 345 L646 418 C642 432 644 448 653 458.400 C660 466 675 472 698 476 L880 471.500 L971.700 466.600 C995 463 1008 458 1020 448 C1032 438 1037 430 1040 423.600 L1062 345 C1064 330 1056 318 1040 312 C1030 308.500 1015 307 1000 307 L905 309 L800 312 L718.600 316 Z" fill="none" stroke="#1a861a" stroke-width="1.500"/>
<path d="M646 418 C642 432 644 448 653 458.400 C660 466 675 472 698 476 L880 471.500 L971.700 466.600 C995 463 1008 458 1020 448 C1032 438 1037 430 1040 423.600 L1048 395" fill="none" stroke="#108010" stroke-width="2.100"/>

<!-- orange -->
<path d="M783.600 319.300 L718.600 322 C700 323 686 330 680 340 C676 346 674 350 673 353.700 L652.800 434.300 C650 445 650 452 654 458 C659 465 667 469 678.300 469.700 L748 468.600 Z" fill="none" stroke="#f58a1a" stroke-width="2"/>

<!-- label -->
<rect x="765" y="415" width="255" height="13.500" fill="#6e5e54" opacity=".72"/>
<text x="767.500" y="426" font-family="Liberation Sans,sans-serif" font-weight="bold" font-size="10.800" fill="#fff" textLength="250" lengthAdjust="spacingAndGlyphs">Вся модель\2D Геометрия\Глобальная СК\k14</text>

<!-- approach/retract thick green -->
<g fill="none" stroke="#0f800f" stroke-width="2.600" stroke-linecap="round" stroke-linejoin="round">
<path d="M732 289 C690 296 648 318 626.500 349"/>
<path d="M622.500 337 L625.500 351.500"/>
<path d="M1024.500 264 L1028 279 C1040 281 1050 284 1056 286.600 C1066 291 1074 295 1080.600 298.800 C1090 305 1095 311 1099 318.400 C1103 326 1105.500 331 1106.300 336.800 L1083 431.700 C1076 443 1068 452 1056 460 C1045 468 1033 474 1019 479.500 L975.700 493 L971.500 467"/>
</g>
<path d="M603.700 454.300 C610 478 640 496 679.700 502" fill="none" stroke="#0f800f" stroke-width="1.500"/>
<!-- red dashed -->
<g fill="none" stroke="#f01010" stroke-width="2" stroke-dasharray="6 3.800">
<path d="M732.500 289 L730 273 L1023.700 263.800"/>
<path d="M622 338 L679.700 502"/>
</g>
<path d="M959.700 397 L963.300 413" stroke="#f01010" stroke-width="1.600" stroke-dasharray="4 2.500" fill="none"/>
<path d="M622.300 335.500 L623.800 341" stroke="#0f800f" stroke-width="2.400"/>

<!-- axes -->
<g>
<path d="M660.300 222 L681 321.600" stroke="#111" stroke-width="1.300"/>
<path d="M701 241 L682 321" stroke="#111" stroke-width="1.300"/>
<path d="M657.600 206.500 L663.300 221.500 L657.300 223 Z" fill="#1020ff" stroke="#0010c0" stroke-width=".5"/>
<path d="M704.600 229.500 L704 242 L698.200 240.600 Z" fill="#10c060" stroke="#0a9040" stroke-width=".5"/>
<path d="M677.800 301 L683.500 311 L682 321 L678 321 L675.500 311 Z" fill="#2a40ff"/>
<path d="M685.500 305 L689.500 313 L684.500 321 L682.500 321 L682.500 311 Z" fill="#10d020"/>
<path d="M686 321.200 L697 320.800 L697 323.800 L686 323.800 Z" fill="#ff6a6a"/>
<path d="M696 318.800 L708.500 321.800 L696 324.800 Z" fill="#ff4a4a"/>
<path d="M808 315.800 L821 318 L808 320.200 Z" fill="#ff5a5a"/>
<circle cx="681.600" cy="322.800" r="5" fill="#fff" stroke="#222" stroke-width=".6"/>
<path d="M681.600 322.800 V317.800 A5 5 0 0 1 686.600 322.800 Z M681.600 322.800 V327.800 A5 5 0 0 1 676.600 322.800 Z" fill="#111"/>
</g>
<text x="689.600" y="344.500" font-family="Liberation Sans,sans-serif" font-size="12" fill="#111">G54</text>

<!-- tool holder -->
<g id="holderG">
<g transform="rotate(-3.500 597 419)">
<path d="M553.400 419 V431 C553.400 465 641 465 641 431 V419 Z" fill="url(#gDiscSide)"/>
<ellipse cx="597.200" cy="419" rx="43.800" ry="25.700" fill="#50b450"/>
<g fill="#4e4e4e">
<path d="M597.200 419 L554.500 413 L559 404.500 L566 399.500 Z"/>
<path d="M597.200 419 L556.500 431 L560.500 436 Z"/>
<path d="M597.200 419 L601.500 444.600 L618 440.500 Z"/>
<path d="M597.200 419 L640.500 414 L636 404 L628 398.500 L617 394.500 Z"/>
</g>
<path d="M620 417.500 L634 412.500" stroke="#2f7a2f" stroke-width="1.200"/>
<ellipse cx="597.200" cy="419" rx="43.800" ry="25.700" fill="none" stroke="#2e8a2e" stroke-width=".8"/>
</g>
<path d="M563.700 392 L573 424 C578 435 612 433 619.600 414.600 L617 392 Z" fill="url(#gCone)"/>
<path d="M574 421 C580 431 610 430 618.500 414" fill="none" stroke="#2c2c2c" stroke-width="1.400"/>
<path d="M557.700 368 C557.500 362 561 359 566 358 L606 349.500 C610 350 612.500 353 612.800 357 L616 375 L617 392 C612 404 568 408 563.700 394 L559 380 Z" fill="#161616"/>
<path d="M558 369 C562 385 608 381 613.500 359" fill="none" stroke="#4e4e4e" stroke-width="2.600"/>
<path d="M561 383 C568 398 612 393 616.500 376" fill="none" stroke="#555" stroke-width="2.400"/>
<path d="M559.500 376 C565 391 610 387 615 368" fill="none" stroke="#0a0a0a" stroke-width="2"/>
<path d="M562.800 308 L560 366 C564 378 604 375 609.300 354 L582.400 306 Z" fill="url(#gCone)"/>
<ellipse cx="572.800" cy="307.500" rx="10" ry="6.800" fill="#3c3c3c" stroke="#2a2a2a" stroke-width=".5"/>
<circle cx="598.500" cy="429.200" r="1.800" fill="#fff"/>
</g>
<!-- vtabs -->
<path d="M499 264.500 H516 Q518.500 264.500 518.500 267 V332 Q518.500 334.500 516 334.500 H499 Z" fill="#fff" stroke="#8a94a4" stroke-width="1"/>
<rect x="498.500" y="265" width="1.500" height="69" fill="#fff"/>
<g font-family="Liberation Sans,sans-serif" font-weight="bold" font-size="14.300" fill="#fff" stroke="#fff" stroke-width="2.800" stroke-linejoin="round" opacity=".95">
<text transform="translate(512.500,176.700) rotate(-90)" textLength="57" lengthAdjust="spacingAndGlyphs">3D Модель</text>
<text transform="translate(512.500,259.600) rotate(-90)" textLength="71" lengthAdjust="spacingAndGlyphs">2D Геометрия</text>
<text transform="translate(512.500,427.400) rotate(-90)" textLength="86" lengthAdjust="spacingAndGlyphs">Моделирование</text>
</g>
<g font-family="Liberation Sans,sans-serif" font-weight="bold" font-size="14.300" fill="#505050" stroke="#505050" stroke-width=".5">
<text transform="translate(512.500,176.700) rotate(-90)" textLength="57" lengthAdjust="spacingAndGlyphs">3D Модель</text>
<text transform="translate(512.500,259.600) rotate(-90)" textLength="71" lengthAdjust="spacingAndGlyphs">2D Геометрия</text>
<text transform="translate(512.500,427.400) rotate(-90)" textLength="86" lengthAdjust="spacingAndGlyphs">Моделирование</text>
<text transform="translate(512.500,328.700) rotate(-90)" textLength="57.500" lengthAdjust="spacingAndGlyphs" fill="#1c5ea8" stroke="#1c5ea8">Технология</text>
</g>
<!-- /vtabs -->
</svg>
<!-- /VIEWSVG -->

</div>
</body>
</html>
